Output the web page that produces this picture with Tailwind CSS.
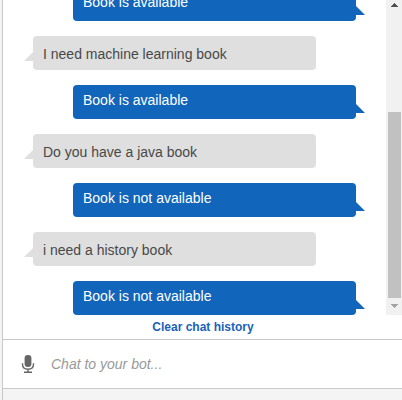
<!DOCTYPE html>
<html lang="en">
<head>
<meta charset="utf-8">
<title>Chat</title>
<script src="https://cdn.jsdelivr.net/npm/@tailwindcss/browser@4"></script>
</head>
<body class="w-[402px] h-[400px] overflow-hidden bg-[#f4f4f4] pl-[2px] font-['Liberation_Sans',Arial,sans-serif]">
<div class="h-[400px] flex flex-col border-l border-[#c8c8c8]">
  <div class="h-[315px] shrink-0 flex bg-white overflow-hidden">
    <div class="flex-1 h-full flex flex-col justify-end gap-[15px] pl-[30px] text-[14px] leading-[20px]">
      <div class="relative shrink-0 ml-[40px] w-[283px] h-[34px] rounded-[4px] bg-[#1165ba] text-white px-[10px] pt-[5px]">Book is available
        <svg class="absolute left-[283px] top-[18px]" width="9" height="10"><path d="M0 1L9 10H0Z" fill="#1165ba"/></svg></div>
      <div class="relative shrink-0 w-[283px] h-[34px] rounded-[4px] bg-[#dfdfdf] text-[#484848] px-[10px] pt-[8px]">I need machine learning book
        <svg class="absolute -left-[9px] top-[15px]" width="9" height="10"><path d="M9 1L0 10H9Z" fill="#dfdfdf"/></svg></div>
      <div class="relative shrink-0 ml-[40px] w-[283px] h-[34px] rounded-[4px] bg-[#1165ba] text-white px-[10px] pt-[5px]">Book is available
        <svg class="absolute left-[283px] top-[18px]" width="9" height="10"><path d="M0 1L9 10H0Z" fill="#1165ba"/></svg></div>
      <div class="relative shrink-0 w-[283px] h-[34px] rounded-[4px] bg-[#dfdfdf] text-[#484848] px-[10px] pt-[8px]">Do you have a java book
        <svg class="absolute -left-[9px] top-[15px]" width="9" height="10"><path d="M9 1L0 10H9Z" fill="#dfdfdf"/></svg></div>
      <div class="relative shrink-0 ml-[40px] w-[283px] h-[34px] rounded-[4px] bg-[#1165ba] text-white px-[10px] pt-[5px]">Book is not available
        <svg class="absolute left-[283px] top-[18px]" width="9" height="10"><path d="M0 1L9 10H0Z" fill="#1165ba"/></svg></div>
      <div class="relative shrink-0 w-[283px] h-[34px] rounded-[4px] bg-[#dfdfdf] text-[#484848] px-[10px] pt-[8px]">i need a history book
        <svg class="absolute -left-[9px] top-[15px]" width="9" height="10"><path d="M9 1L0 10H9Z" fill="#dfdfdf"/></svg></div>
      <div class="relative shrink-0 ml-[40px] w-[283px] h-[34px] rounded-[4px] bg-[#1165ba] text-white px-[10px] pt-[5px]">Book is not available
        <svg class="absolute left-[283px] top-[18px]" width="9" height="10"><path d="M0 1L9 10H0Z" fill="#1165ba"/></svg></div>
    </div>
    <div class="w-[16px] h-full bg-[#f1f1f1] flex flex-col justify-between">
      <svg width="16" height="17" shape-rendering="crispEdges"><path d="M8 3h1v1h1v1h1v1h1v1H5V6h1V5h1V4h1z" fill="#505050"/></svg>
      <div class="mt-auto ml-[2px] w-[13px] h-[186px] bg-[#c1c1c1]"></div>
      <svg width="16" height="17" shape-rendering="crispEdges"><path d="M5 6h7v1h-1v1h-1v1H9v1H8V9H7V8H6V7H5z" fill="#a3a3a3"/></svg>
    </div>
  </div>
  <div class="h-[24px] shrink-0 bg-white pt-[3px] pl-[1px] text-center text-[12px] leading-[18px] font-bold text-[#1b61b8]">Clear chat history</div>
  <div class="h-[50px] shrink-0 flex items-center bg-white border-y border-[#c8c8c8] pl-[18px]">
    <svg width="14" height="20" viewBox="0 0 14 20" fill="none"><rect x="3.600" y="1" width="6.800" height="12" rx="3.200" fill="#666"/><path d="M1.500 9.300v1C1.500 13.600 3.700 15.200 7 15.200s5.500-1.600 5.500-4.900v-1M7 15v3.500M3 18.300h8" stroke="#666" stroke-width="1.400"/></svg>
    <span class="ml-[16px] text-[14px] leading-[20px] italic text-[#999]">Chat to your bot...</span>
  </div>
</div>
</body>
</html>
